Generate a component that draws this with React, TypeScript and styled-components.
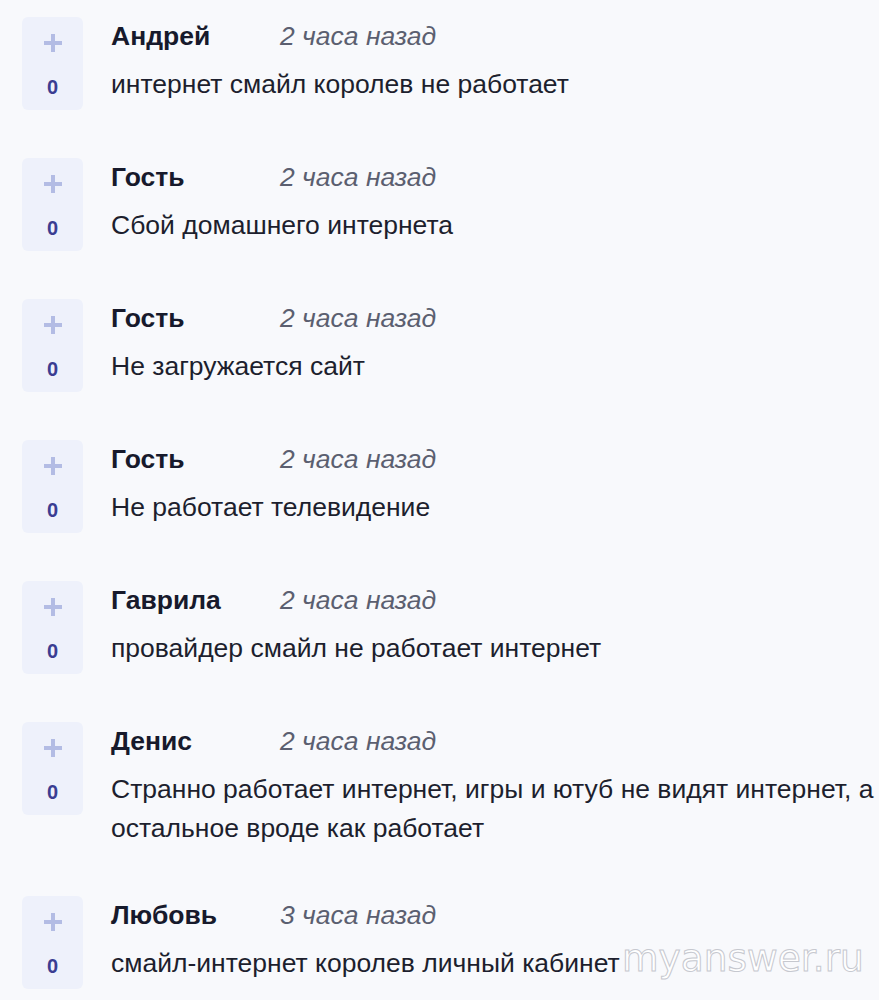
import React from 'react';
import styled, { createGlobalStyle } from 'styled-components';

const GlobalStyle = createGlobalStyle`
    html, body {
        margin: 0;
        padding: 0;
        background: #f8f9fc;
    }
    body {
        font-family: "Liberation Sans", Arial, sans-serif;
    }
`;

type Comment = {
    name: string;
    time: string;
    text: string;
    votes: number;
};

const comments: Comment[] = [
    { name: 'Андрей', time: '2 часа назад', text: 'интернет смайл королев не работает', votes: 0 },
    { name: 'Гость', time: '2 часа назад', text: 'Сбой домашнего интернета', votes: 0 },
    { name: 'Гость', time: '2 часа назад', text: 'Не загружается сайт', votes: 0 },
    { name: 'Гость', time: '2 часа назад', text: 'Не работает телевидение', votes: 0 },
    { name: 'Гаврила', time: '2 часа назад', text: 'провайдер смайл не работает интернет', votes: 0 },
    {
        name: 'Денис',
        time: '2 часа назад',
        text: 'Странно работает интернет, игры и ютуб не видят интернет, а остальное вроде как работает',
        votes: 0,
    },
    { name: 'Любовь', time: '3 часа назад', text: 'смайл-интернет королев личный кабинет', votes: 0 },
];

const Page = styled.div`
    position: relative;
    width: 879px;
    height: 1000px;
    overflow: hidden;
    background: #f8f9fc;
`;

const List = styled.div`
    display: flex;
    flex-direction: column;
    gap: 48px;
    padding: 17px 0 0 22px;
`;

const Row = styled.div`
    display: flex;
    align-items: flex-start;
    gap: 28px;
`;

const VoteBox = styled.div`
    flex: none;
    width: 61px;
    height: 93px;
    border-radius: 6px;
    background: #eef1fb;
    display: flex;
    flex-direction: column;
    align-items: center;
`;

const PlusButton = styled.div`
    margin-top: 16px;
    width: 20px;
    height: 20px;
    color: #b3bce4;
    display: flex;
`;

const Score = styled.div`
    margin-top: 22px;
    font-size: 20px;
    font-weight: 700;
    color: #3b3d92;
    line-height: 24px;
`;

const Body = styled.div`
    flex: none;
    width: 780px;
    display: flex;
    flex-direction: column;
`;

const Meta = styled.div`
    display: flex;
    align-items: center;
    height: 38px;
`;

const Author = styled.span`
    width: 169px;
    font-size: 26.5px;
    font-weight: 700;
    color: #171a2c;
`;

const Time = styled.span`
    font-size: 26.5px;
    font-style: italic;
    color: #5b5f70;
`;

const Text = styled.p`
    margin: 10px 0 0;
    font-size: 26.5px;
    line-height: 39px;
    color: #1d1f2e;
`;

const Watermark = styled.div`
    position: absolute;
    left: 622px;
    top: 936px;
    font-family: "DejaVu Sans", sans-serif;
    font-size: 37.5px;
    color: #ffffff;
    -webkit-text-stroke: 1px #c6c8cf;
`;

const Plus = () => (
    <svg viewBox="0 0 20 20" width="20" height="20">
        <path d="M10 1v18M1 10h18" stroke="currentColor" strokeWidth="4" />
    </svg>
);

export default function App() {
    return (
        <Page>
            <GlobalStyle />
            <List>
                {comments.map((c, i) => (
                    <Row key={i}>
                        <VoteBox>
                            <PlusButton>
                                <Plus />
                            </PlusButton>
                            <Score>{c.votes}</Score>
                        </VoteBox>
                        <Body>
                            <Meta>
                                <Author>{c.name}</Author>
                                <Time>{c.time}</Time>
                            </Meta>
                            <Text>{c.text}</Text>
                        </Body>
                    </Row>
                ))}
            </List>
            <Watermark>myanswer.ru</Watermark>
        </Page>
    );
}
